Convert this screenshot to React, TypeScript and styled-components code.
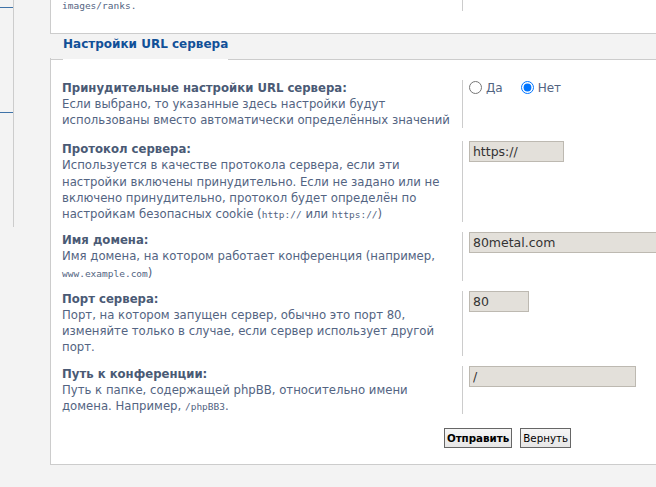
import React from 'react';
import styled, { createGlobalStyle } from 'styled-components';

type Setting = {
    title: string,
    desc: React.ReactNode,
    field: React.ReactNode,
}

const GlobalStyle = createGlobalStyle`
    html, body {
        margin: 0;
        padding: 0;
        overflow: hidden;
        background: #f3f3f3;
    }
    body {
        font-family: "DejaVu Sans", Verdana, sans-serif;
        font-size: 11.7px;
        color: #536482;
    }
`;

export default function App() {
    const settings: Setting[] = [
        {
            title: 'Принудительные настройки URL сервера:',
            desc: 'Если выбрано, то указанные здесь настройки будут использованы вместо автоматически определённых значений',
            field: (
                <RadioGroup>
                    <RadioLabel><input type='radio' name='force' /> Да</RadioLabel>
                    <RadioLabel><input type='radio' name='force' defaultChecked /> Нет</RadioLabel>
                </RadioGroup>
            ),
        },
        {
            title: 'Протокол сервера:',
            desc: (
                <>
                    Используется в качестве протокола сервера, если эти настройки включены принудительно. Если не задано или не
                    включено принудительно, протокол будет определён по настройкам безопасных cookie (<Code>http://</Code> или <Code>https://</Code>)
                </>
            ),
            field: <TextInput defaultValue='https://' $width={95} />,
        },
        {
            title: 'Имя домена:',
            desc: <>Имя домена, на котором работает конференция (например, <Code>www.example.com</Code>)</>,
            field: <TextInput defaultValue='80metal.com' $width={260} />,
        },
        {
            title: 'Порт сервера:',
            desc: 'Порт, на котором запущен сервер, обычно это порт 80, изменяйте только в случае, если сервер использует другой порт.',
            field: <TextInput defaultValue='80' $width={60} />,
        },
        {
            title: 'Путь к конференции:',
            desc: <>Путь к папке, содержащей phpBB, относительно имени домена. Например, <Code>/phpBB3</Code>.</>,
            field: <TextInput defaultValue='/' $width={167} />,
        },
    ];

    return (
        <Page>
            <GlobalStyle />
            <Sidebar>
                <MenuItem $height={7} />
                <MenuItem $height={104} />
            </Sidebar>
            <Main>
                <TopPanel>
                    <Row>
                        <Term $tight><Code>images/ranks.</Code></Term>
                        <Def />
                    </Row>
                </TopPanel>
                <LegendRow>
                    <LegendEdge $width={12} />
                    <Legend>Настройки URL сервера</Legend>
                    <LegendEdge />
                </LegendRow>
                <Fieldset>
                    {settings.map((s, i) => (
                        <Row key={s.title} $spaced={i === 0}>
                            <Term>
                                <Title>{s.title}</Title>
                                <Desc>{s.desc}</Desc>
                            </Term>
                            <Def>{s.field}</Def>
                        </Row>
                    ))}
                    <Buttons>
                        <Button type='submit' $bold>Отправить</Button>
                        <Button type='reset'>Вернуть</Button>
                    </Buttons>
                </Fieldset>
            </Main>
        </Page>
    );
}

const Page = styled.div`
    display: flex;
    align-items: flex-start;
    width: 980px;
`;

const Sidebar = styled.div`
    width: 13px;
    height: 227px;
    border-right: 1px solid #cccccc;
    flex-shrink: 0;
`;

const MenuItem = styled.div<{ $height: number }>`
    height: ${(p) => p.$height}px;
    border-bottom: 1px solid #3f73a8;
`;

const Main = styled.div`
    margin-left: 36px;
    width: 914px;
    flex-shrink: 0;
`;

const TopPanel = styled.div`
    background: #ffffff;
    border-left: 1px solid #cccccc;
    border-bottom: 1px solid #cccccc;
    padding: 0 11px 22px;
`;

const LegendRow = styled.div`
    display: flex;
    align-items: flex-end;
    height: 25px;
`;

const LegendEdge = styled.div<{ $width?: number }>`
    flex: ${(p) => (p.$width ? `0 0 ${p.$width}px` : '1')};
    border-bottom: 1px solid #cccccc;
    border-left: ${(p) => (p.$width ? '1px solid #cccccc' : 'none')};
    height: 1px;
    margin-bottom: -1px;
`;

const Legend = styled.div`
    font-weight: bold;
    font-size: 12px;
    color: #115098;
    line-height: 16px;
    padding: 2px 0 5px;
    border-bottom: 1px solid #ffffff;
    margin-bottom: -1px;
    align-self: stretch;
`;

const Fieldset = styled.div`
    background: #ffffff;
    border-left: 1px solid #cccccc;
    border-top: 1px solid #cccccc;
    border-bottom: 1px solid #cccccc;
    padding: 20px 11px 16px;
    display: flex;
    flex-direction: column;
    gap: 10px;
`;

const Row = styled.div<{ $spaced?: boolean }>`
    display: grid;
    grid-template-columns: 45% 1fr;
    margin-bottom: ${(p) => (p.$spaced ? '3px' : '0')};
`;

const Term = styled.div<{ $tight?: boolean }>`
    border-right: 1px solid #cccccc;
    padding-right: 3px;
    line-height: ${(p) => (p.$tight ? '10px' : '16.2px')};
`;

const Def = styled.div`
    padding-left: 6px;
`;

const Title = styled.div`
    font-weight: bold;
    color: #4a5a75;
`;

const Desc = styled.div`
    color: #536482;
`;

const Code = styled.code`
    font-family: "DejaVu Sans Mono", monospace;
    font-size: 9.5px;
    line-height: 1;
    color: #536482;
`;

const RadioGroup = styled.div`
    display: flex;
    gap: 18px;
    padding-top: 1px;
`;

const RadioLabel = styled.label`
    display: flex;
    align-items: center;
    gap: 4px;
    font-size: 12px;
    color: #536482;

    input {
        margin: 0;
        width: 13px;
        height: 13px;
    }
`;

const TextInput = styled.input<{ $width: number }>`
    box-sizing: border-box;
    width: ${(p) => p.$width}px;
    height: 21px;
    margin: 0;
    padding: 1px 3px;
    background: #e3e0da;
    border: 1px solid #bdb9b1;
    font-family: "DejaVu Sans", Verdana, sans-serif;
    font-size: 12.5px;
    color: #333333;
    outline: none;
`;

const Buttons = styled.div`
    display: flex;
    justify-content: center;
    gap: 8px;
    margin-top: 4px;
`;

const Button = styled.button<{ $bold?: boolean }>`
    height: 20px;
    padding: 0 2px;
    border: 1px solid #666666;
    background: linear-gradient(#f6f6f6, #e6e6e6);
    font-family: "DejaVu Sans", Verdana, sans-serif;
    font-size: 10.3px;
    font-weight: ${(p) => (p.$bold ? 'bold' : 'normal')};
    color: #000000;
`;
